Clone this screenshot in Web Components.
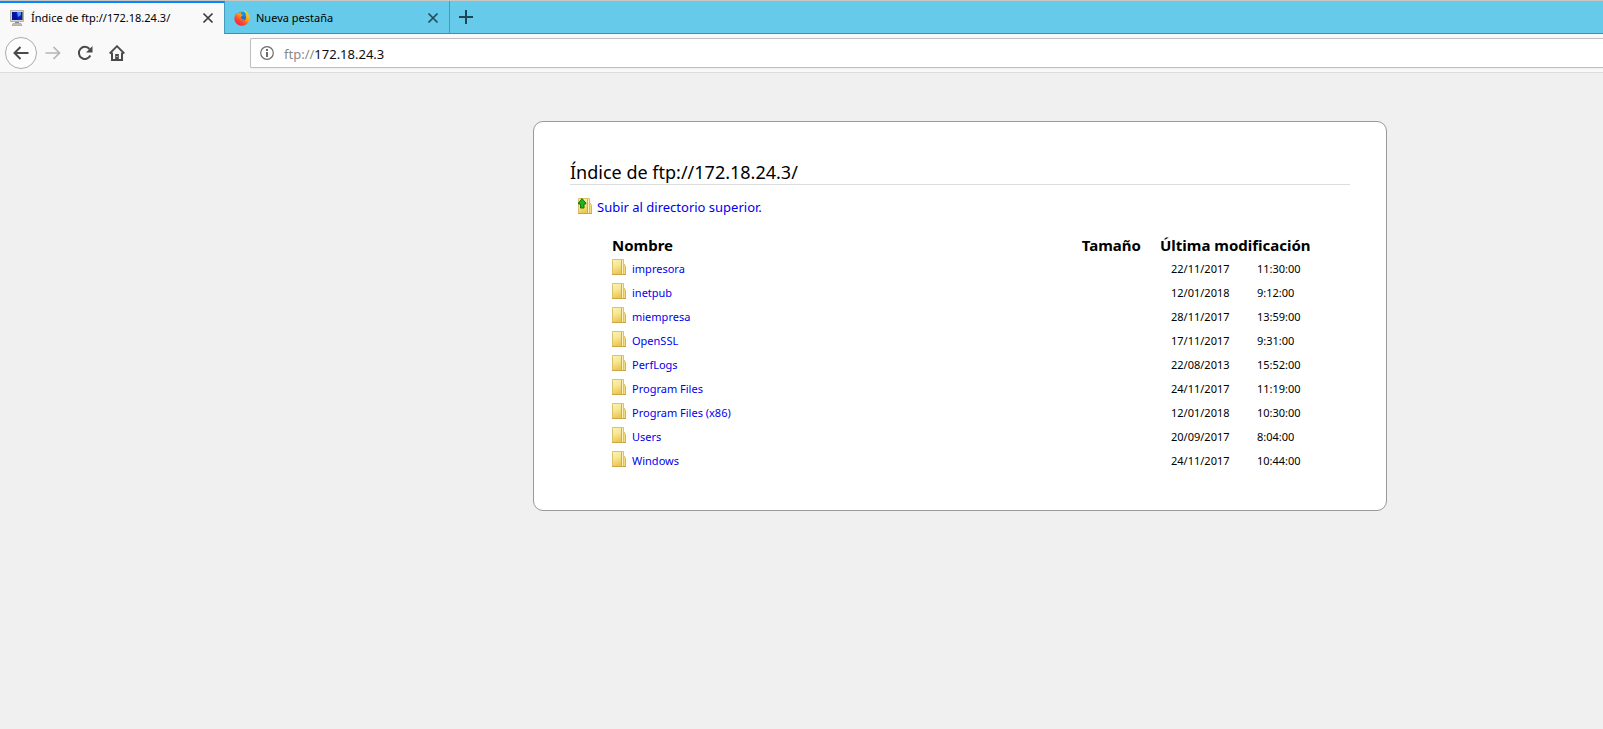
<!DOCTYPE html>
<html lang="es">
<head>
<meta charset="utf-8">
<title>Índice de ftp://172.18.24.3/</title>
<style>
  html, body { margin: 0; min-height: 100vh; }
  body { background: #f0f0f0; color: #000; font: 12px/16px "Noto Sans", "Open Sans", sans-serif; overflow-x: hidden; }
</style>
</head>
<body>
<browser-window></browser-window>

<script>
const define = (name, html, setup) => {
  const template = document.createElement('template');
  template.innerHTML = html;
  customElements.define(name, class extends HTMLElement {
    constructor() {
      super();
      this.attachShadow({ mode: 'open' }).append(template.content.cloneNode(true));
    }
    connectedCallback() { if (setup) setup(this, this.shadowRoot); }
  });
};

define('monitor-icon', `
<style>:host{display:block;width:16px;height:16px}svg{display:block}</style>
<svg width="16" height="16" viewBox="0 0 16 16" aria-hidden="true">
  <path d="M1.500.500h13v11h-13z" fill="#d9d5cc" stroke="#b5b1a8"/>
  <path d="M3 2h10v8H3z" fill="#0a1fb4"/>
  <path d="M8 2h4v3l-3 2z" fill="#4d8bff"/><path d="M3 2h3l3 8H3z" fill="#0512a0"/>
  <path d="M13 2h1v8h-1z" fill="#77746d"/>
  <path d="M6 12h4v1H6z" fill="#888"/><path d="M4 13.500h8l1 2H3z" fill="#c2beb5" stroke="#9a978f" stroke-width=".6"/>
</svg>`);

define('firefox-icon', `
<style>:host{display:block;width:16px;height:16px}svg{display:block}</style>
<svg width="16" height="16" viewBox="0 0 16 16" aria-hidden="true">
  <defs>
    <linearGradient id="f" x1=".9" y1="0" x2=".2" y2="1"><stop offset="0" stop-color="#ffe21f"/><stop offset=".4" stop-color="#ffa51a"/><stop offset=".7" stop-color="#ff4a2b"/><stop offset="1" stop-color="#ef1550"/></linearGradient>
    <linearGradient id="b" x1="0" y1="0" x2="0" y2="1"><stop offset="0" stop-color="#16a0f4"/><stop offset="1" stop-color="#2747ae"/></linearGradient>
  </defs>
  <circle cx="8" cy="7.5" r="6" fill="url(#b)"/>
  <path d="M1.800 2.400c.5.3.8.8 1 1.300.8-.7 1.800-.8 2.500-.5C5.700 2.500 6.500 1.900 7.300 1.800 6.600 2.500 6.400 3.200 6.800 4c.4.700 1.300.5 1.900.9-.2.8-1.200 1-1.600 1.600-.1.700.3 1.300-.4 1.300C7.300 9.300 9 9 10.200 9.200 9.600 10 8.700 10.300 7.900 10.200c1.900.8 3.900-.3 4.200-2.400.2-1.500-.3-2.600-1.300-3.500.6 0 1.100.3 1.500.6C11.900 2.900 10.500 1.900 9.500.5c2.900.5 4.300 2.100 4.900 3.700.9 1.200 1.400 2.800 1.200 4.600C15.100 13 12 15.700 8 15.700 3.700 15.700.4 12.300.4 8.200c0-1.300.3-2.600 1-3.700 0-.8 0-1.500.4-2.100z" fill="url(#f)"/>
</svg>`);

define('folder-icon', `
<style>:host{display:block;width:16px;height:16px;flex:none}svg{display:block}.arrow{display:none}:host([up]) .arrow{display:block}</style>
<svg width="16" height="16" viewBox="0 0 16 16" aria-hidden="true">
  <defs><linearGradient id="g" x1="0" y1="0" x2=".3" y2="1"><stop offset="0" stop-color="#fbf5b8"/><stop offset=".5" stop-color="#f6e592"/><stop offset="1" stop-color="#ebc750"/></linearGradient></defs>
  <path d="M10.500 5.500h2l1 2v8h-3z" fill="#f2dc80" stroke="#d6b45a"/>
  <path d="M.500.500h11v15H.500z" fill="url(#g)" stroke="#dcc06a"/>
  <path d="M0 15.500h14" stroke="#cba548"/>
  <path d="M9.500 1v14" stroke="#d0a950"/><path d="M10.500 1v14" stroke="#fff3bd"/>
  <path class="arrow" d="M4 .500 7.800 5v1H6v4H2.500V6H.500V5z" fill="#22b222" stroke="#087808"/>
</svg>`);

define('browser-tab', `
<style>
  :host{display:flex;align-items:center;box-sizing:border-box;width:225px;height:33px;padding:1px 8px 0 9px;border-right:1px solid #459bb9;border-bottom:1px solid #3d91ae;font-size:12px;line-height:16px}
  :host([active]){background:#f9f9fa;border-top:2px solid #0a84ff;border-bottom:0;padding-top:0;padding-bottom:1px}
  .label{flex:1;margin-left:6px;white-space:nowrap;font-size:11px}
  button{display:grid;place-items:center;width:16px;height:16px;padding:0;border:0;background:none;color:#3c3c3c}
  :host(:not([active])) button{color:#234b5b}
</style>
<slot name="icon"></slot><span class="label"><slot></slot></span>
<button type="button" aria-label="Cerrar pestaña"><svg width="12" height="12" viewBox="0 0 12 12"><path d="M1.500 1.500l9 9m0-9l-9 9" fill="none" stroke="currentColor" stroke-width="1.700"/></svg></button>`);

define('tab-strip', `
<style>
  :host{display:flex;height:33px;border-top:1px solid #c9c7c2;background:#66caea}
  .rest{flex:1;border-bottom:1px solid #3d91ae;display:flex;align-items:center}
  button{display:grid;place-items:center;width:32px;height:32px;padding:0;border:0;background:none;color:#1f4552}
</style>
<browser-tab active><monitor-icon slot="icon"></monitor-icon>Índice de ftp://172.18.24.3/</browser-tab>
<browser-tab><firefox-icon slot="icon"></firefox-icon>Nueva pestaña</browser-tab>
<div class="rest"><button type="button" aria-label="Abrir nueva pestaña"><svg width="14" height="14" viewBox="0 0 14 14"><path d="M7 0v14M0 7h14" stroke="currentColor" stroke-width="2"/></svg></button></div>`);

define('nav-bar', `
<style>
  :host{display:flex;align-items:center;height:38px;background:#f9f9fa;border-bottom:1px solid #dcdcdc}
  button{display:grid;place-items:center;width:32px;height:32px;padding:0;border:0;background:none;color:#4a4a4b}
  .back{box-sizing:border-box;border:1px solid #ababab;border-radius:50%;background:#fdfdfd;margin-left:5px}
  .forward{color:#b5b5b6}
  .field{flex:1;display:flex;align-items:center;box-sizing:border-box;height:30px;margin-left:117px;border:1px solid #bfbfc0;border-right:0;border-radius:2px 0 0 2px;background:#fff;box-shadow:0 1px 2px #0000000d;padding-left:9px;font-size:13px;line-height:18px}
  .field svg{margin-right:10px}
  label,input{padding:2px 0 0}
  label{color:#8a8a8c}
  input{flex:1;min-width:0;border:0;outline:0;background:none;font:inherit;color:#0c0c0d}
</style>
<button class="back" type="button" aria-label="Atrás"><svg width="16" height="16" viewBox="0 0 16 16"><path d="M15.500 8H1.500M7.500 2l-6 6 6 6" fill="none" stroke="currentColor" stroke-width="2"/></svg></button>
<button class="forward" type="button" aria-label="Adelante" disabled><svg width="16" height="16" viewBox="0 0 16 16"><path d="M.500 8h14M8.500 2l6 6-6 6" fill="none" stroke="currentColor" stroke-width="1.700"/></svg></button>
<button type="button" aria-label="Recargar"><svg width="16" height="16" viewBox="0 0 16 16"><path d="M13.300 10.500A6 6 0 1 1 12.500 4" fill="none" stroke="currentColor" stroke-width="2"/><path d="M15.500 1v6.500H9z" fill="currentColor"/></svg></button>
<button type="button" aria-label="Inicio"><svg width="16" height="16" viewBox="0 0 16 16"><path d="M.700 8.500 8 1.200l7.300 7.300" fill="none" stroke="currentColor" stroke-width="1.800"/><path d="M3 7.500V15h10V7.500" fill="none" stroke="currentColor" stroke-width="2"/><path d="M6.200 15V9h3.600v6z" fill="currentColor"/><path d="M7.500 11h1v1h-1z" fill="#f9f9fa"/></svg></button>
<div class="field">
  <svg width="14" height="14" viewBox="0 0 14 14" aria-hidden="true"><circle cx="7" cy="7" r="6.300" fill="none" stroke="#6c6c6d" stroke-width="1.200"/><path d="M6 3h2v2H6zM6 6h2v5H6z" fill="#6c6c6d"/></svg>
  <label for="url">ftp://</label><input id="url" type="text" value="172.18.24.3" spellcheck="false">
</div>`);

define('directory-table', `
<style>
  :host{display:block;width:90%;margin:16px auto 0}
  table{width:100%;border-collapse:collapse;table-layout:fixed}
  th{padding:0 3px;height:24px;font-size:15px;line-height:24px;text-align:left;white-space:nowrap}
  td{padding:0 3px;height:24px;font-size:11px;line-height:16px;white-space:nowrap}
  .size{width:80px;box-sizing:border-box;text-align:right}
  .date{width:100px}.time{width:67px}
  th.modified{padding-left:16px}
  td.date{padding-left:27px}td.time{padding-left:13px}
  td,th{box-sizing:border-box}
  a{display:flex;align-items:center;gap:4px;color:#00e;text-decoration:none}
  folder-icon{margin-bottom:4px}
</style>
<table>
  <colgroup><col><col class="size"><col class="date"><col class="time"></colgroup>
  <thead><tr><th scope="col">Nombre</th><th scope="col" class="size">Tamaño</th><th scope="col" class="modified" colspan="2">Última modificación</th></tr></thead>
  <tbody></tbody>
</table>`, (host, root) => {
  const rows = [
    ['impresora', '22/11/2017', '11:30:00'], ['inetpub', '12/01/2018', '9:12:00'],
    ['miempresa', '28/11/2017', '13:59:00'], ['OpenSSL', '17/11/2017', '9:31:00'],
    ['PerfLogs', '22/08/2013', '15:52:00'], ['Program Files', '24/11/2017', '11:19:00'],
    ['Program Files (x86)', '12/01/2018', '10:30:00'], ['Users', '20/09/2017', '8:04:00'],
    ['Windows', '24/11/2017', '10:44:00']
  ];
  root.querySelector('tbody').innerHTML = rows.map(([name, date, time]) =>
    `<tr><td><a href="#${encodeURIComponent(name)}"><folder-icon></folder-icon>${name}</a></td><td class="size"></td><td class="date">${date}</td><td class="time">${time}</td></tr>`).join('');
});

define('directory-page', `
<style>
  :host{display:grid;grid-template-columns:533fr minmax(0,854px) 216fr;padding:48px 0}
  main{grid-column:2;box-sizing:border-box;border:1px solid #9a9a9a;border-radius:10px;background:#fff;padding:36px 36px 37px}
  h1{margin:0;padding-top:3px;border-bottom:1px solid #dcdcdc;font-size:18px;line-height:23px;font-weight:400}
  .up{display:flex;align-items:center;gap:3px;width:max-content;margin:12px 0 0 8px;font-size:13px;line-height:20px;color:#00e;text-decoration:none}
  folder-icon{margin-bottom:2px}
</style>
<main>
  <h1>Índice de ftp://172.18.24.3/</h1>
  <a class="up" href="#superior"><folder-icon up></folder-icon>Subir al directorio superior.</a>
  <directory-table></directory-table>
</main>`);

define('browser-window', `
<style>:host{display:block}</style>
<tab-strip></tab-strip>
<nav-bar></nav-bar>
<directory-page></directory-page>`);
</script>
</body>
</html>
